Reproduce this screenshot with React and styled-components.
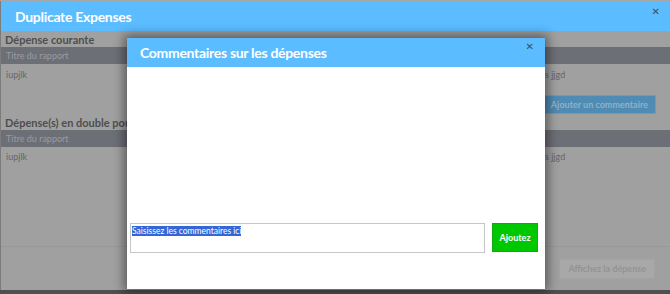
import React from 'react';
import styled, { createGlobalStyle } from 'styled-components';

const Global = createGlobalStyle`
  html, body { margin: 0; padding: 0; }
  body {
    width: 670px;
    height: 294px;
    overflow: hidden;
    background: #4f4f4f;
    font-family: Lato, "Open Sans", sans-serif;
  }
`;

const Page = styled.div`
  position: relative;
  width: 670px;
  height: 294px;
  box-sizing: border-box;
  border-top: 1px solid #a6a6a6;
  background: #505050;
`;

const OuterDialog = styled.div`
  width: 670px;
  height: 289px;
  display: flex;
  flex-direction: column;
  background: #a0a0a0;
  box-sizing: border-box;
  border-left: 1px solid #7c7c7c;
`;

const Header = styled.div`
  height: ${p => p.$h}px;
  flex: none;
  background: #5bbcff;
  display: flex;
  justify-content: space-between;
  align-items: center;
  padding: 0 ${p => p.$pr}px 0 ${p => p.$pl}px;
  box-sizing: border-box;
`;

const HeaderTitle = styled.div`
  color: #fff;
  font-weight: 700;
  font-size: 14px;
  letter-spacing: -0.3px;
`;

const Close = styled.span`
  align-self: flex-start;
  margin-top: ${p => p.$mt}px;
  color: #3d4f5c;
  font-size: 10px;
  line-height: 10px;
  font-family: "DejaVu Sans", sans-serif;
`;

const OuterBody = styled.div`
  flex: 1;
  display: flex;
  flex-direction: column;
`;

const SectionTitle = styled.div`
  font-weight: 700;
  font-size: 11px;
  line-height: 14px;
  color: #4e4e4e;
  padding-left: 4px;
  margin-top: ${p => p.$mt}px;
  white-space: nowrap;
`;

const TableRow = styled.div`
  display: grid;
  grid-template-columns: 539px 1fr;
  height: ${p => (p.$head ? 17 : 18)}px;
  align-items: center;
  padding-left: 5px;
  font-size: 9px;
  background: ${p => (p.$head ? '#6d6f76' : 'transparent')};
  color: ${p => (p.$head ? '#9a9ca1' : '#666')};
  margin-top: ${p => p.$mt || 0}px;
`;

const ActionRow = styled.div`
  display: flex;
  justify-content: flex-end;
  padding-right: 14px;
  margin-top: ${p => p.$mt}px;
`;

const DimButton = styled.div`
  height: ${p => p.$h}px;
  padding: 0 ${p => p.$px}px;
  display: flex;
  align-items: center;
  box-sizing: border-box;
  font-size: 9px;
  font-weight: 700;
  background: ${p => p.$bg};
  color: ${p => p.$fg};
  border: 1px solid ${p => p.$bd};
`;

const Footer = styled.div`
  margin-top: auto;
  height: 44px;
  border-top: 1px solid #989898;
  display: flex;
  justify-content: flex-end;
  align-items: center;
  padding-right: 15px;
  box-sizing: border-box;
`;

const Modal = styled.div`
  position: absolute;
  left: 127px;
  top: 37px;
  width: 418px;
  height: 251px;
  background: #fff;
  display: flex;
  flex-direction: column;
  box-shadow: 0 0 10px 3px rgba(0, 0, 0, 0.45);
`;

const ModalBody = styled.div`
  flex: 1;
  display: flex;
  flex-direction: column;
  justify-content: flex-end;
  padding: 0 7px 36px 3px;
`;

const CommentRow = styled.div`
  display: flex;
  gap: 7px;
  align-items: flex-start;
`;

const CommentField = styled.div`
  width: 355px;
  height: 30px;
  box-sizing: border-box;
  border: 1px solid #c6c6c6;
  padding: 2px 1px;
  font-size: 8.5px;
  line-height: 10px;
  color: #fff;
`;

const Highlight = styled.span`
  background: #3367d6;
  color: #fff;
`;

const AddButton = styled.div`
  width: 46px;
  height: 29px;
  box-sizing: border-box;
  background: #00c800;
  border: 1px solid #12a812;
  color: #fff;
  font-weight: 700;
  font-size: 9px;
  display: flex;
  align-items: center;
  justify-content: center;
`;

export default function App() {
  return (
    <>
      <Global />
      <Page>
        <OuterDialog>
          <Header $h={30} $pl={14} $pr={10}>
            <HeaderTitle>Duplicate Expenses</HeaderTitle>
            <Close $mt={6}>✕</Close>
          </Header>
          <OuterBody>
            <SectionTitle $mt={2}>Dépense courante</SectionTitle>
            <TableRow $head>
              <span>Titre du rapport</span>
              <span></span>
            </TableRow>
            <TableRow $mt={1}>
              <span>iupjlk</span>
              <span>s jjgd</span>
            </TableRow>
            <ActionRow $mt={12}>
              <DimButton $h={19} $px={7} $bg="#508bb3" $fg="#8db2ca" $bd="#6a9cbd">
                Ajouter un commentaire
              </DimButton>
            </ActionRow>
            <SectionTitle $mt={2}>Dépense(s) en double pour cette dépense</SectionTitle>
            <TableRow $head>
              <span>Titre du rapport</span>
              <span></span>
            </TableRow>
            <TableRow>
              <span>iupjlk</span>
              <span>s jjgd</span>
            </TableRow>
            <Footer>
              <DimButton $h={20} $px={8} $bg="#a8a8a8" $fg="#939393" $bd="#a3a3a3">
                Affichez la dépense
              </DimButton>
            </Footer>
          </OuterBody>
        </OuterDialog>
        <Modal>
          <Header $h={29} $pl={13} $pr={11}>
            <HeaderTitle>Commentaires sur les dépenses</HeaderTitle>
            <Close $mt={4}>✕</Close>
          </Header>
          <ModalBody>
            <CommentRow>
              <CommentField>
                <Highlight>Saisissez les commentaires ici</Highlight>
              </CommentField>
              <AddButton>Ajoutez</AddButton>
            </CommentRow>
          </ModalBody>
        </Modal>
      </Page>
    </>
  );
}
